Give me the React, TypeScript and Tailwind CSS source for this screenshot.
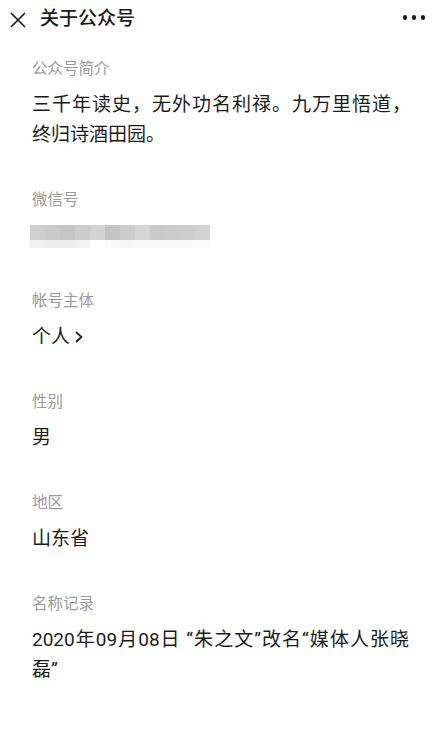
import React from "react";

const font = { fontFamily: 'Roboto, "Noto Sans CJK SC", "Noto Sans", sans-serif' };

function Section({ label, children }: { label: string; children: React.ReactNode }) {
  return (
    <div className="flex flex-col mb-[39.5px]">
      <div className="text-[15.5px] leading-[20px] text-[#9a9a9a]">{label}</div>
      <div className="mt-[11.5px] text-[19px] leading-[30px] text-[#1b1b1b] text-justify">{children}</div>
    </div>
  );
}

const mosaicTop = ["#cfcfcf", "#cacaca", "#c6c6c6", "#cccccc", "#d4d4d4", "#c3c3c3", "#cdcdcd", "#d6d6d6", "#c9c9c9", "#cbcbcb", "#cecece", "#d3d3d3"];
const mosaicBottom = ["#f0f0f0", "#ededed", "#eeeeee", "#f3f3f3", "#ffffff", "#fafafa", "#f7f7f7", "#f9f9f9", "#f8f8f8", "#f9f9f9", "#fafafa", "#fbfbfb"];

export default function App() {
  return (
    <div className="w-[443px] h-[729px] bg-white overflow-hidden" style={font}>
      <div className="h-[38px] flex items-center pl-[10px] pr-[18px]">
        <svg width="16" height="16" viewBox="0 0 16 16" className="shrink-0 mt-[1px]">
          <path d="M1 1 L15 15 M15 1 L1 15" stroke="#1a1a1a" strokeWidth="1.6" />
        </svg>
        <div className="ml-[14px] text-[19px] leading-[24px] text-[#1a1a1a] font-medium">关于公众号</div>
        <div className="ml-auto flex gap-[4.5px] -mt-[3px]">
          <span className="w-[4.5px] h-[4.5px] rounded-full bg-[#1a1a1a]" />
          <span className="w-[4.5px] h-[4.5px] rounded-full bg-[#1a1a1a]" />
          <span className="w-[4.5px] h-[4.5px] rounded-full bg-[#1a1a1a]" />
        </div>
      </div>
      <div className="pt-[20.5px] px-[32px]">
        <Section label="公众号简介">三千年读史，无外功名利禄。九万里悟道，终归诗酒田园。</Section>
        <Section label="微信号">
          <div className="h-[30px] flex flex-col justify-center -ml-[2px]">
            <div className="flex">
              {mosaicTop.map((c, i) => (
                <div key={i} className="w-[15px] h-[15px]" style={{ backgroundColor: c }} />
              ))}
            </div>
            <div className="flex">
              {mosaicBottom.map((c, i) => (
                <div key={i} className="w-[15px] h-[8px]" style={{ backgroundColor: c }} />
              ))}
            </div>
          </div>
        </Section>
        <Section label="帐号主体">
          <span className="inline-flex items-center">
            个人
            <svg width="10" height="14" viewBox="0 0 10 14" className="ml-[4px]">
              <path d="M2 2 L7.5 7 L2 12" stroke="#1b1b1b" strokeWidth="1.7" fill="none" />
            </svg>
          </span>
        </Section>
        <Section label="性别">男</Section>
        <Section label="地区">山东省</Section>
        <Section label="名称记录">
          <div className="text-justify [text-align-last:justify] pr-[2px]">2020年09月08日 “朱之文”改名“媒体人张晓</div>
          <div>磊”</div>
        </Section>
      </div>
    </div>
  );
}
